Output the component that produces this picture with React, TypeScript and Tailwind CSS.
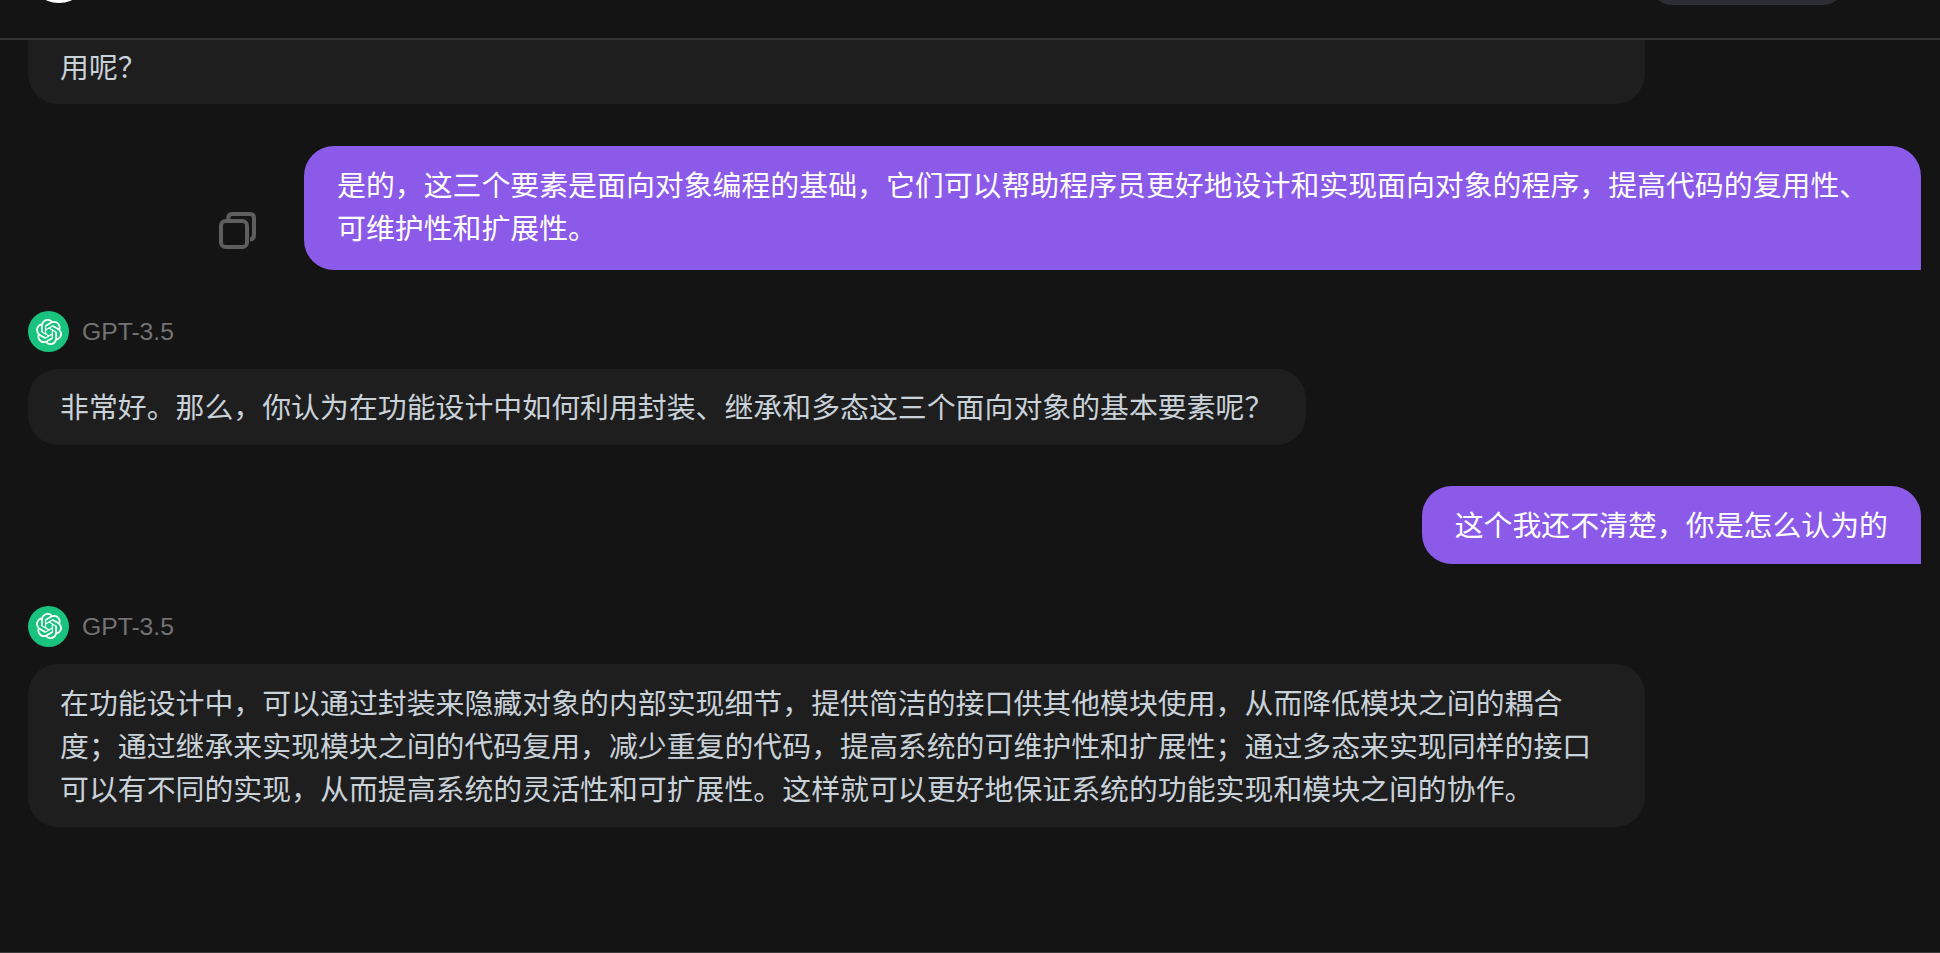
import { SiOpenai } from "react-icons/si";

const FONT = "font-['Liberation_Sans','Noto_Sans_CJK_SC',sans-serif]";

const BotLabel = () => (
  <div className="flex items-center gap-[13px] h-[41px]">
    <div className="flex h-[41px] w-[41px] items-center justify-center rounded-full bg-[#19c37d]">
      <SiOpenai className="h-[26px] w-[26px] text-white" />
    </div>
    <span className="text-[24.7px] text-[#737373]">GPT-3.5</span>
  </div>
);

const CopyIcon = () => (
  <svg width="37" height="37" viewBox="0 0 37 37" fill="none" stroke="#5e5e5e" strokeWidth="4">
    <rect x="2" y="9" width="26" height="26" rx="4.5" />
    <path d="M9.3 7 V6 Q9.3 2 13.3 2 H31 Q35 2 35 6 V23 Q35 27.3 31 27.5" />
  </svg>
);

export default function App() {
  return (
    <div className={`${FONT} h-[953px] w-full overflow-hidden bg-[#141414] border-b border-[#3a3a3a]`}>
      {/* top bar */}
      <header className="flex h-[40px] justify-between border-b-2 border-[#333333] overflow-hidden pl-[28px] pr-[95px]">
        <div className="-mt-[59px] h-[62px] w-[62px] rounded-full bg-white" />
        <div className="-mt-[39px] h-[44px] w-[195px] rounded-[22px] bg-[#2d2e35]" />
      </header>

      <main className="flex flex-col text-[28.9px] leading-[43.2px] overflow-hidden h-[912px]">
        {/* first answer, scrolled under the bar */}
        <div className="ml-[28px] w-[1617px] rounded-b-[30px] bg-[#1e1e1e] pl-[32px] pr-[33px] pt-[7px] pb-[14px] text-[#c9d1d9]">
          用呢？
        </div>

        <div className="mt-[42px] flex items-end justify-end mr-[19px]">
          <div className="mr-[47.6px] mb-[21px]">
            <CopyIcon />
          </div>
          <div className="w-[1617px] rounded-[30px] rounded-br-none bg-[#8b5ae8] px-[33px] py-[18.8px] text-white">
            是的，这三个要素是面向对象编程的基础，它们可以帮助程序员更好地设计和实现面向对象的程序，提高代码的复用性、可维护性和扩展性。
          </div>
        </div>

        <div className="mt-[41px] ml-[28px]">
          <BotLabel />
        </div>
        <div className="mt-[17px] ml-[28px] w-fit rounded-[30px] bg-[#1e1e1e] pl-[32px] pr-[33px] pt-[17.4px] pb-[15.4px] text-[#c9d1d9]">
          非常好。那么，你认为在功能设计中如何利用封装、继承和多态这三个面向对象的基本要素呢？
        </div>

        <div className="mt-[41px] mr-[19px] self-end rounded-[30px] rounded-br-none bg-[#8b5ae8] px-[33px] pt-[19.25px] pb-[15.25px] text-white">
          这个我还不清楚，你是怎么认为的
        </div>

        <div className="mt-[42px] ml-[28px]">
          <BotLabel />
        </div>
        <div className="mt-[17px] ml-[28px] w-[1617px] rounded-[30px] bg-[#1e1e1e] pl-[32px] pr-[33px] pt-[19px] pb-[14.2px] text-[#c9d1d9]">
          在功能设计中，可以通过封装来隐藏对象的内部实现细节，提供简洁的接口供其他模块使用，从而降低模块之间的耦合度；通过继承来实现模块之间的代码复用，减少重复的代码，提高系统的可维护性和扩展性；通过多态来实现同样的接口可以有不同的实现，从而提高系统的灵活性和可扩展性。这样就可以更好地保证系统的功能实现和模块之间的协作。
        </div>
      </main>
    </div>
  );
}
